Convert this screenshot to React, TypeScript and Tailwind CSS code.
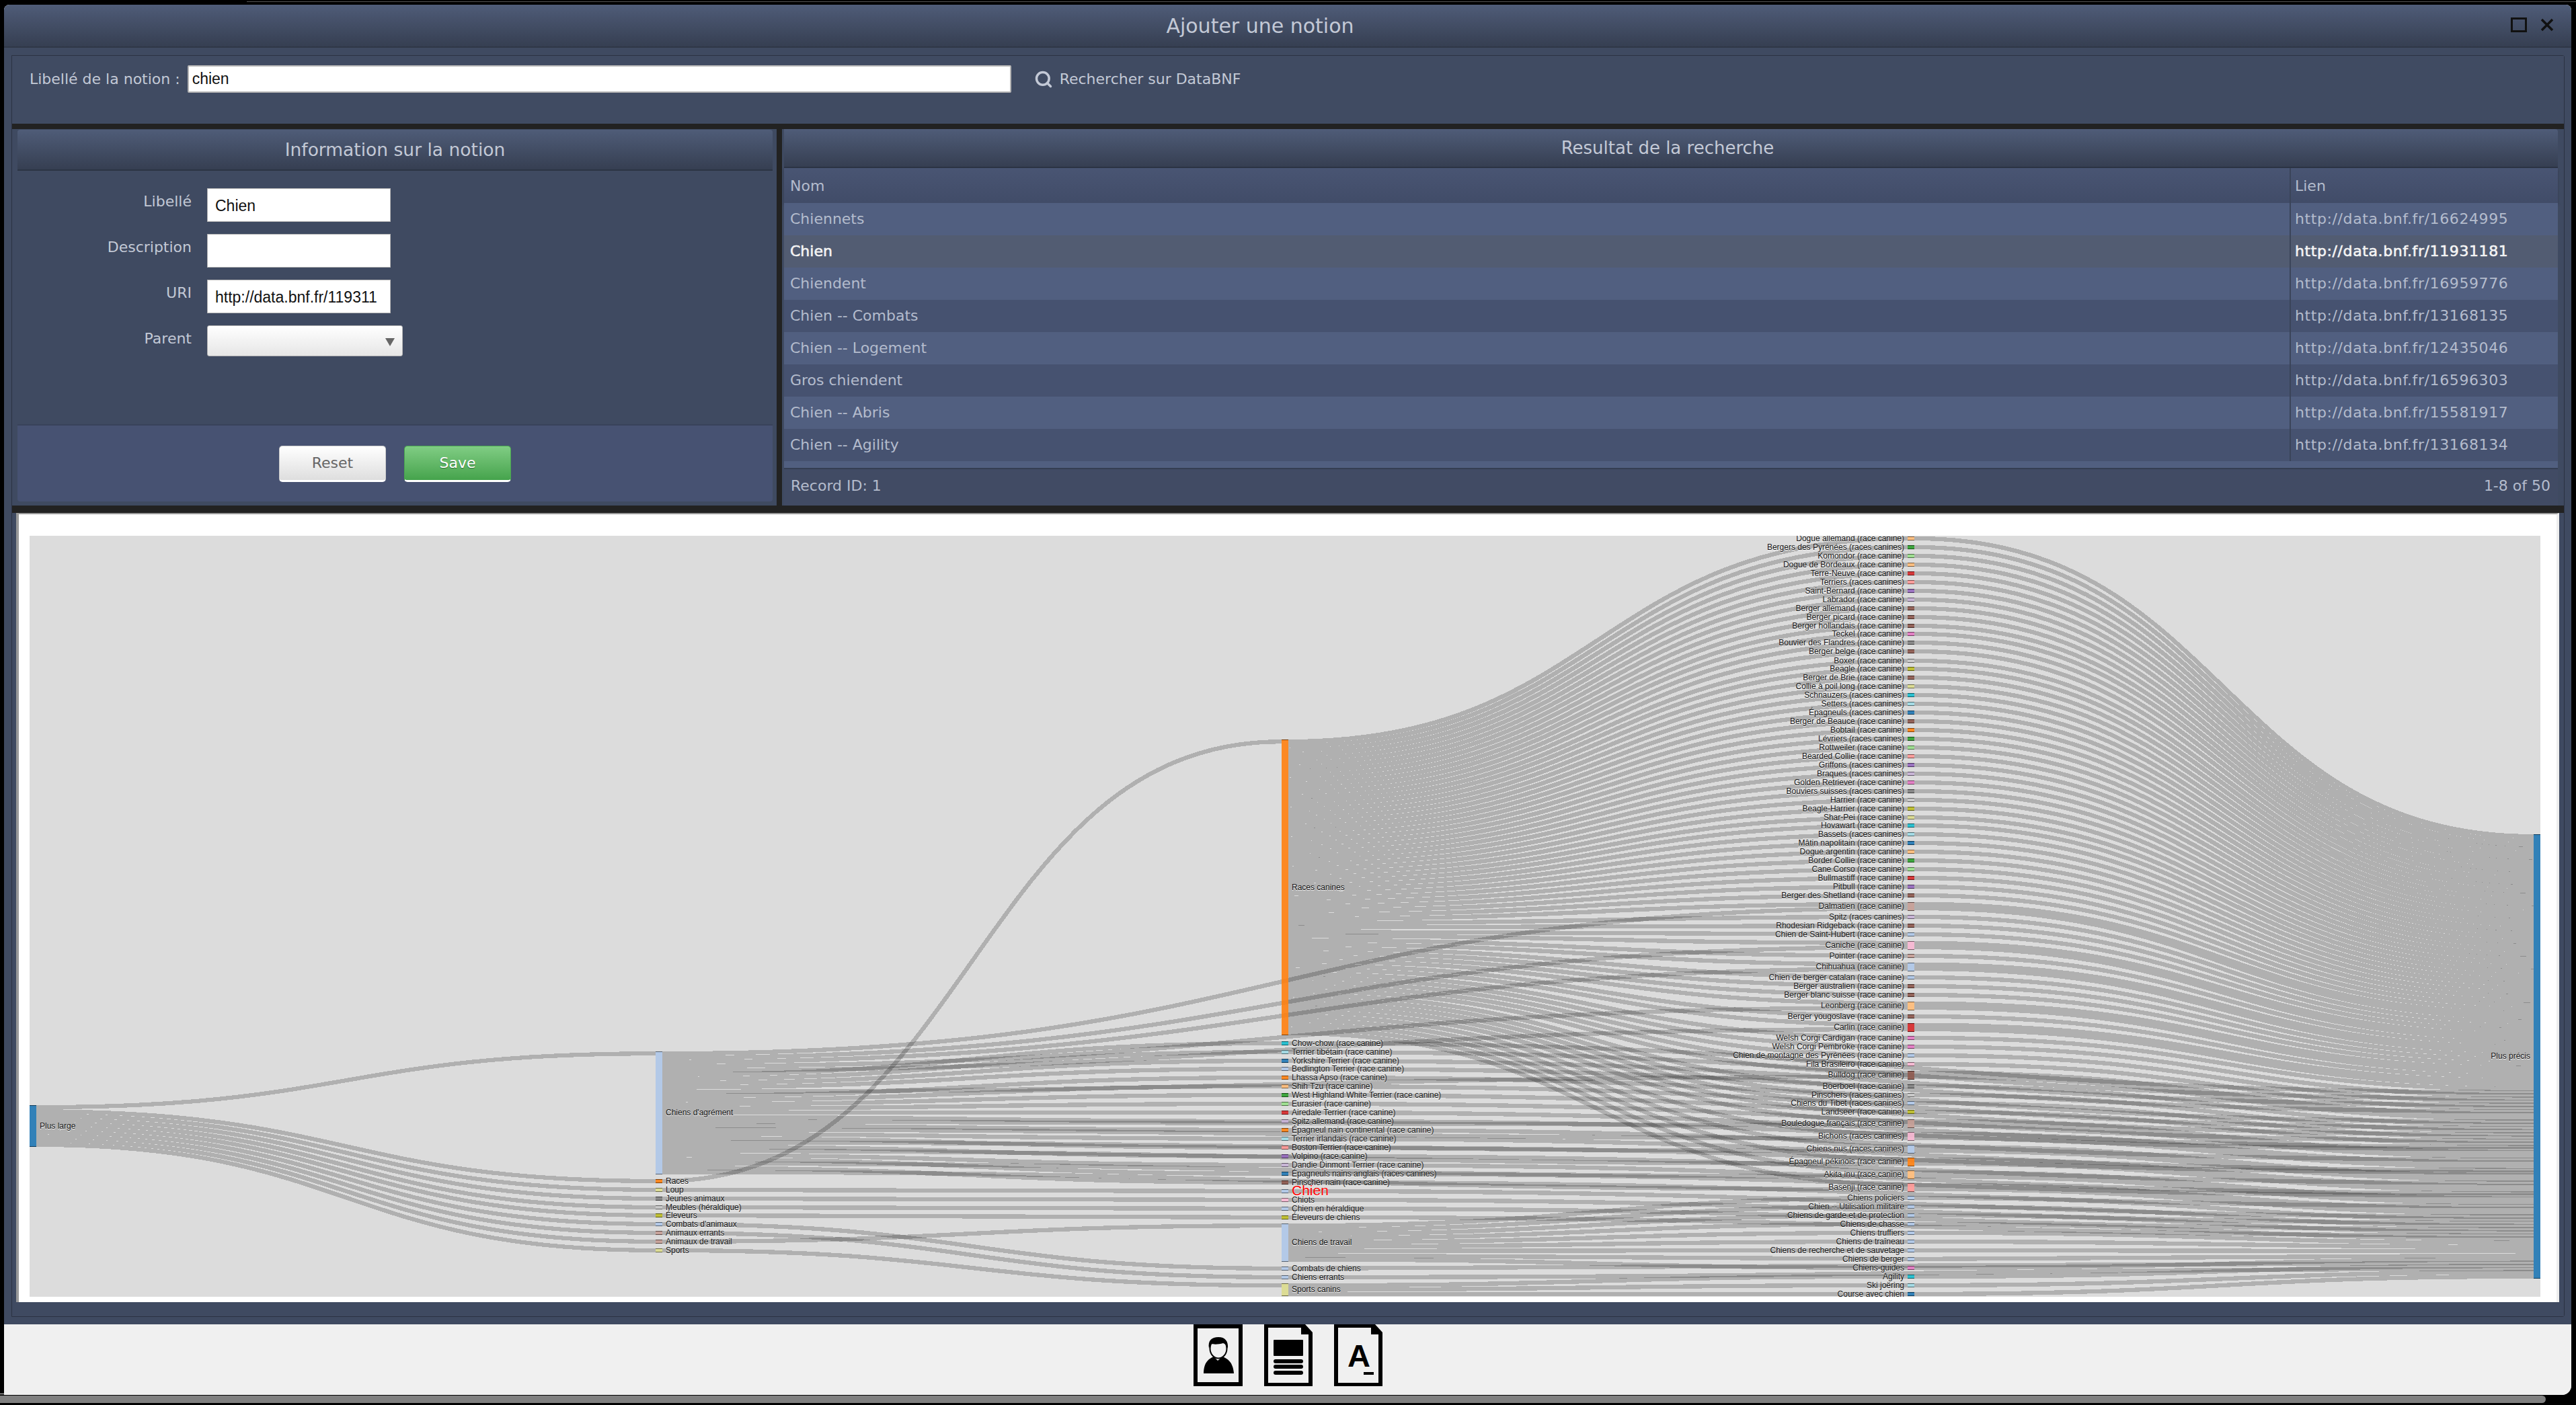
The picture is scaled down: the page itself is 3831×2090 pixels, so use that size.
import { Search } from "lucide-react";

const BLUE = "#1f77b4";
const LBLUE = "#aec7e8";
const ORANGE = "#ff7f0e";
const PEACH = "#ffbb78";
const GREEN = "#2ca02c";
const LGREEN = "#98df8a";
const RED = "#d62728";
const SALMON = "#ff9896";
const PURPLE = "#9467bd";
const LILAC = "#c5b0d5";
const BROWN = "#8c564b";
const TAN = "#c49c94";
const PINK = "#e377c2";
const LPINK = "#f7b6d2";
const GREY = "#7f7f7f";
const LGREY = "#c7c7c7";
const OLIVE = "#bcbd22";
const KHAKI = "#dbdb8d";
const CYAN = "#17becf";
const LCYAN = "#9edae5";

type Raw = [string, string, number, number?];

type SankeyNode = {
  name: string;
  color: string;
  col: number;
  cy: number;
  h: number;
};

const X = [44, 975, 1906, 2837, 3768];
const NODE_W = 10;
const OX = 44;
const OY = 797;
const UNIT = 6.3;

const col1: Raw[] = [
  ["Chiens d'agrément", LBLUE, 1655.5, 183],
  ["Races", ORANGE, 1757],
  ["Loup", KHAKI, 1770],
  ["Jeunes animaux", GREY, 1783],
  ["Meubles (héraldique)", LGREY, 1796],
  ["Éleveurs", OLIVE, 1808],
  ["Combats d'animaux", LBLUE, 1821],
  ["Animaux errants", TAN, 1834],
  ["Animaux de travail", TAN, 1847],
  ["Sports", KHAKI, 1860],
];

const dogsCol2: Raw[] = [
  ["Chow-chow (race canine)", CYAN, 1552],
  ["Terrier tibétain (race canine)", LCYAN, 1565],
  ["Yorkshire Terrier (race canine)", BLUE, 1578],
  ["Bedlington Terrier (race canine)", LBLUE, 1590],
  ["Lhassa Apso (race canine)", ORANGE, 1603],
  ["Shih Tzu (race canine)", PEACH, 1616],
  ["West Highland White Terrier (race canine)", GREEN, 1629],
  ["Eurasier (race canine)", LGREEN, 1642],
  ["Airedale Terrier (race canine)", RED, 1655],
  ["Spitz allemand (race canine)", LILAC, 1668],
  ["Épagneul nain continental (race canine)", ORANGE, 1681],
  ["Terrier irlandais (race canine)", LCYAN, 1694],
  ["Boston Terrier (race canine)", SALMON, 1707],
  ["Volpino (race canine)", PURPLE, 1720],
  ["Dandie Dinmont Terrier (race canine)", LILAC, 1733],
  ["Épagneuls nains anglais (races canines)", BLUE, 1746],
  ["Pinscher nain (race canine)", BROWN, 1759],
];

const otherCol2: Raw[] = [
  ["Races canines", ORANGE, 1320, 440],
  ["Chien", LBLUE, 1772],
  ["Chiots", LPINK, 1785],
  ["Chien en héraldique", LBLUE, 1798],
  ["Éleveurs de chiens", OLIVE, 1811],
  ["Chiens de travail", LBLUE, 1848.5, 57],
  ["Combats de chiens", LBLUE, 1887],
  ["Chiens errants", LBLUE, 1900],
  ["Sports canins", KHAKI, 1918.5, 19],
];

const breedsCol3: Raw[] = [
  ["Dogue allemand (race canine)", PEACH, 801],
  ["Bergers des Pyrénées (races canines)", GREEN, 814],
  ["Komondor (race canine)", LGREEN, 827],
  ["Dogue de Bordeaux (race canine)", PEACH, 840],
  ["Terre-Neuve (race canine)", RED, 853],
  ["Terriers (races canines)", SALMON, 866],
  ["Saint-Bernard (race canine)", PURPLE, 879],
  ["Labrador (race canine)", LILAC, 892],
  ["Berger allemand (race canine)", BROWN, 905],
  ["Berger picard (race canine)", BROWN, 918],
  ["Berger hollandais (race canine)", BROWN, 931],
  ["Teckel (race canine)", PINK, 943],
  ["Bouvier des Flandres (race canine)", GREY, 956],
  ["Berger belge (race canine)", BROWN, 969],
  ["Boxer (race canine)", LGREY, 983],
  ["Beagle (race canine)", OLIVE, 995],
  ["Berger de Brie (race canine)", BROWN, 1008],
  ["Collie à poil long (race canine)", KHAKI, 1021],
  ["Schnauzers (races canines)", CYAN, 1034],
  ["Setters (races canines)", LCYAN, 1047],
  ["Épagneuls (races canines)", BLUE, 1060],
  ["Berger de Beauce (race canine)", BROWN, 1073],
  ["Bobtail (race canine)", ORANGE, 1086],
  ["Lévriers (races canines)", GREEN, 1099],
  ["Rottweiler (race canine)", LGREEN, 1112],
  ["Bearded Collie (race canine)", SALMON, 1125],
  ["Griffons (races canines)", PURPLE, 1138],
  ["Braques (races canines)", LILAC, 1151],
  ["Golden Retriever (race canine)", PINK, 1164],
  ["Bouviers suisses (races canines)", GREY, 1177],
  ["Harrier (race canine)", LGREY, 1190],
  ["Beagle-Harrier (race canine)", OLIVE, 1203],
  ["Shar-Pei (race canine)", KHAKI, 1216],
  ["Hovawart (race canine)", CYAN, 1228],
  ["Bassets (races canines)", LCYAN, 1241],
  ["Mâtin napolitain (race canine)", BLUE, 1254],
  ["Dogue argentin (race canine)", PEACH, 1267],
  ["Border Collie (race canine)", GREEN, 1280],
  ["Cane Corso (race canine)", LGREEN, 1293],
  ["Bullmastiff (race canine)", RED, 1306],
  ["Pitbull (race canine)", PURPLE, 1319],
  ["Berger des Shetland (race canine)", BROWN, 1332],
  ["Dalmatien (race canine)", TAN, 1348, 13],
  ["Spitz (races canines)", LILAC, 1364],
  ["Rhodesian Ridgeback (race canine)", BROWN, 1377],
  ["Chien de Saint-Hubert (race canine)", LBLUE, 1390],
  ["Caniche (race canine)", LPINK, 1406, 13],
  ["Pointer (race canine)", TAN, 1422],
  ["Chihuahua (race canine)", LBLUE, 1438, 13],
  ["Chien de berger catalan (race canine)", LBLUE, 1454],
  ["Berger australien (race canine)", BROWN, 1467],
  ["Berger blanc suisse (race canine)", BROWN, 1480],
  ["Leonberg (race canine)", PEACH, 1496, 13],
  ["Berger yougoslave (race canine)", BROWN, 1512],
  ["Carlin (race canine)", RED, 1528, 13],
  ["Welsh Corgi Cardigan (race canine)", PINK, 1544],
  ["Welsh Corgi Pembroke (race canine)", PINK, 1557],
  ["Chien de montagne des Pyrénées (race canine)", LBLUE, 1570],
  ["Fila Brasileiro (race canine)", LPINK, 1583],
  ["Bulldog (race canine)", BROWN, 1599, 13],
  ["Boerboel (race canine)", GREY, 1616],
  ["Pinschers (races canines)", LGREY, 1629],
  ["Chiens du Tibet (races canines)", LBLUE, 1641],
  ["Landseer (race canine)", OLIVE, 1654],
  ["Bouledogue français (race canine)", TAN, 1671, 13],
  ["Bichons (races canines)", LPINK, 1690, 13],
  ["Chiens nus (races canines)", LBLUE, 1709, 13],
  ["Épagneul pékinois (race canine)", ORANGE, 1728, 13],
  ["Akita inu (race canine)", PEACH, 1747, 13],
  ["Basenji (race canine)", SALMON, 1766, 13],
];

const workCol3: Raw[] = [
  ["Chiens policiers", LBLUE, 1782],
  ["Chien -- Utilisation militaire", LBLUE, 1795],
  ["Chiens de garde et de protection", LBLUE, 1808],
  ["Chiens de chasse", LBLUE, 1821],
  ["Chiens truffiers", LBLUE, 1834],
  ["Chiens de traîneau", LBLUE, 1847],
  ["Chiens de recherche et de sauvetage", LBLUE, 1860],
  ["Chiens de berger", LBLUE, 1873],
  ["Chiens-guides", PINK, 1886],
];

const sportCol3: Raw[] = [
  ["Agility", CYAN, 1899],
  ["Ski joëring", LCYAN, 1912],
  ["Course avec chien", BLUE, 1925],
];

function makeNodes(list: Raw[], col: number): SankeyNode[] {
  return list.map(([name, color, cy, h]) => ({ name, color, col, cy, h: h ?? 6.5 }));
}

const plusLarge = makeNodes([["Plus large", BLUE, 1675, 62]], 0)[0];
const plusPrecis = makeNodes([["Plus précis", BLUE, 1571.5, 661]], 4)[0];
const n1 = makeNodes(col1, 1);
const dogs = makeNodes(dogsCol2, 2);
const others = makeNodes(otherCol2, 2);
const breeds = makeNodes(breedsCol3, 3);
const works = makeNodes(workCol3, 3);
const sports = makeNodes(sportCol3, 3);
const col3All = [...breeds, ...works, ...sports];

const nodes = [plusLarge, ...n1, ...dogs, ...others, ...col3All, plusPrecis];

type Edge = { s: SankeyNode; t: SankeyNode; sw: number; tw: number };
const edges: Edge[] = [];
const addEdge = (s: SankeyNode, t: SankeyNode, sw = 1, tw = 1) => edges.push({ s, t, sw, tw });

n1.forEach((n) => addEdge(plusLarge, n));
const agrement = n1[0];
const tall = breeds.filter((b) => b.h > 10);
dogs.forEach((d) => addEdge(agrement, d));
tall.forEach((b) => addEdge(agrement, b));
const [races, chien, chiots, heraldique, eleveurs, travail, combats, errants, sportsCanins] = others;
addEdge(n1[1], races);
addEdge(n1[2], chien);
addEdge(n1[3], chiots);
addEdge(n1[4], heraldique);
addEdge(n1[5], eleveurs);
addEdge(n1[6], combats);
addEdge(n1[7], errants);
addEdge(n1[8], travail);
addEdge(n1[9], sportsCanins);
breeds.forEach((b) => addEdge(races, b));
works.forEach((w) => addEdge(travail, w));
sports.forEach((s) => addEdge(sportsCanins, s));
col3All.forEach((n) => addEdge(n, plusPrecis, n.h > 10 ? 2 : 1, n.h > 10 ? 2 : 1));
[...dogs, chien, chiots, heraldique, eleveurs, combats, errants].forEach((n) => addEdge(n, plusPrecis, 1, 0.5));

// stack the links on each node, the way d3-sankey does
function layoutLinks() {
  const ys = new Map<Edge, { y0: number; y1: number; w: number }>();
  edges.forEach((e) => ys.set(e, { y0: 0, y1: 0, w: e.sw * UNIT }));
  nodes.forEach((n) => {
    const outs = edges.filter((e) => e.s === n).sort((a, b) => a.t.cy - b.t.cy);
    const outSum = outs.reduce((acc, e) => acc + e.sw, 0);
    const k = Math.min(UNIT, n.h / (outSum || 1));
    let y = n.cy - n.h / 2;
    outs.forEach((e) => {
      const w = e.sw * k;
      const cur = ys.get(e)!;
      cur.y0 = y + w / 2;
      cur.w = w;
      y += w;
    });
    const ins = edges.filter((e) => e.t === n).sort((a, b) => a.s.cy - b.s.cy);
    const inSum = ins.reduce((acc, e) => acc + e.tw, 0);
    const kIn = Math.min(UNIT, n.h / (inSum || 1));
    let yIn = n.cy - n.h / 2;
    ins.forEach((e) => {
      const w = e.tw * kIn;
      ys.get(e)!.y1 = yIn + w / 2;
      yIn += w;
    });
  });
  return edges.map((e) => {
    const v = ys.get(e)!;
    const x0 = X[e.s.col] + NODE_W - OX;
    const x1 = X[e.t.col] - OX;
    const xm = (x0 + x1) / 2;
    const y0 = (v.y0 - OY).toFixed(1);
    const y1 = (v.y1 - OY).toFixed(1);
    return { d: `M${x0},${y0}C${xm},${y0} ${xm},${y1} ${x1},${y1}`, w: v.w };
  });
}

const links = layoutLinks();

function darker(hex: string) {
  const v = parseInt(hex.slice(1), 16);
  const f = (c: number) => Math.round(c * 0.49);
  return `rgb(${f(v >> 16)},${f((v >> 8) & 255)},${f(v & 255)})`;
}

function SankeyChart() {
  return (
    <svg width={3734} height={1132} className="block bg-[#dcdcdc] font-['Liberation_Sans',Arial,sans-serif] [text-shadow:0_1px_0_#fff]">
      <g fill="none" stroke="#000" strokeOpacity={0.2} shapeRendering="crispEdges">
        {links.map((l, i) => (
          <path key={i} d={l.d} strokeWidth={l.w} />
        ))}
      </g>
      {nodes.map((n) => {
        const x = X[n.col] - OX;
        const y = n.cy - n.h / 2 - OY;
        const isChien = n.name === "Chien";
        const left = n.col >= 3;
        return (
          <g key={`${n.col}-${n.name}`} shapeRendering="crispEdges">
            <rect x={x} y={y} width={NODE_W} height={n.h} fill={n.color} fillOpacity={0.9} />
            <rect x={x} y={y} width={NODE_W} height={1} fill={darker(n.color)} />
            <rect x={x} y={y + n.h - 1} width={NODE_W} height={1} fill={darker(n.color)} />
            <text
              x={left ? x - 5 : x + NODE_W + 5}
              y={n.cy - OY}
              dy=".3em"
              textAnchor={left ? "end" : "start"}
              fontSize={isChien ? 21 : 12}
              fill={isChien ? "#ff0000" : "#111"}
            >
              {n.name}
            </text>
          </g>
        );
      })}
    </svg>
  );
}

const rows = [
  ["Chiennets", "http://data.bnf.fr/16624995"],
  ["Chien", "http://data.bnf.fr/11931181"],
  ["Chiendent", "http://data.bnf.fr/16959776"],
  ["Chien -- Combats", "http://data.bnf.fr/13168135"],
  ["Chien -- Logement", "http://data.bnf.fr/12435046"],
  ["Gros chiendent", "http://data.bnf.fr/16596303"],
  ["Chien -- Abris", "http://data.bnf.fr/15581917"],
  ["Chien -- Agility", "http://data.bnf.fr/13168134"],
];

function PanelHeader({ title, className }: { title: string; className: string }) {
  return (
    <div
      className={`flex items-center justify-center bg-linear-to-b from-[#4f5c78] to-[#363f52] border-b-2 border-[#2c3444] text-[#c3c9d6] ${className}`}
    >
      {title}
    </div>
  );
}

function FormRow({ label, children }: { label: string; children: React.ReactNode }) {
  return (
    <div className="flex h-[50px]">
      <div className="w-[259px] pt-[7px] text-right text-[22px] leading-[26px] text-[#c3c9d6]">{label}</div>
      <div className="ml-[23px]">{children}</div>
    </div>
  );
}

function TextInput({ value }: { value: string }) {
  return (
    <div className="h-[50px] w-[273px] overflow-hidden border border-[#b5b5b5] bg-white pl-[11px] font-['Liberation_Sans'] text-[23px] leading-[50px] whitespace-nowrap text-[#111]">
      {value}
    </div>
  );
}

function PortraitIcon() {
  return (
    <svg width={73} height={92} viewBox="0 0 73 92">
      <path d="M0 0H73V92H0Z M6 6V86H67V6Z" fillRule="evenodd" fill="#000" />
      <path d="M15 73C15 60 20 52 30 48L36 54L43 48C54 52 59 60 60 73Z" fill="#000" />
      <ellipse cx="37" cy="36" rx="12.5" ry="14.5" fill="#f0f0f0" stroke="#000" strokeWidth="2" />
      <path d="M23 36C21 24 27 19 37 19C47 19 52 25 51 36C49 31 47 29 44 28C38 30 30 30 26 29C24 31 24 33 23 36Z" fill="#000" />
    </svg>
  );
}

function ArticleIcon() {
  return (
    <svg width={72} height={92} viewBox="0 0 72 92">
      <path d="M0 0H61L72 12V92H0Z M6 5V87H66V15H55V5Z" fillRule="evenodd" fill="#000" />
      <rect x="14" y="23" width="44" height="24" rx="1" fill="#000" />
      <rect x="14" y="52" width="44" height="6" rx="3" fill="#000" />
      <rect x="14" y="60" width="44" height="6" rx="3" fill="#000" />
      <rect x="14" y="69" width="44" height="6" rx="3" fill="#000" />
    </svg>
  );
}

function LetterIcon() {
  return (
    <svg width={72} height={92} viewBox="0 0 72 92">
      <path d="M0 0H61L72 12V92H0Z M6 5V87H66V15H55V5Z" fillRule="evenodd" fill="#000" />
      <text x="37" y="63" textAnchor="middle" fontSize="47" fontWeight="700" fontFamily="Liberation Sans" fill="#000">
        A
      </text>
      <rect x="44" y="71" width="15" height="4" fill="#000" />
    </svg>
  );
}

export default function App() {
  return (
    <div className="relative h-[2090px] w-[3831px] overflow-hidden bg-black font-['DejaVu_Sans',sans-serif]">
      <div className="h-[7px] pt-[2px] pl-[367px]">
        <div className="h-px bg-[#555]" />
      </div>
      <div className="ml-[6px] flex h-[2068px] w-[3818px] flex-col overflow-hidden rounded-t-[8px] rounded-br-[14px] bg-[#f0f0f0]">
        {/* title bar */}
        <div className="relative flex h-[64px] shrink-0 items-center justify-center border-b-2 border-[#2f3747] bg-linear-to-b from-[#4f5c78] to-[#363f52] pr-[82px] text-[30px] text-[#c3c9d6]">
          Ajouter une notion
          <div className="absolute top-[19px] right-[66px] h-[22px] w-[24px] border-[3px] border-[#111]" />
          <svg className="absolute top-[20px] right-[26px]" width={20} height={20} viewBox="0 0 20 20">
            <path d="M2 2L18 18M18 2L2 18" stroke="#111" strokeWidth="3.5" />
          </svg>
        </div>

        {/* window body */}
        <div className="h-[1899px] shrink-0 bg-[#3f4a61] pt-[11px] pr-[10px] pl-[11px]">
          <div className="flex h-[1877px] flex-col rounded-tr-[3px] rounded-br-[3px] border border-[#2b3242]">
            {/* search */}
            <div className="flex h-[101px] shrink-0 items-start bg-[#404b62] pt-[14px] pl-[26px] text-[22px] text-[#c3c9d6]">
              <div className="flex h-[41px] items-center">Libellé de la notion :</div>
              <div className="ml-[11px] h-[41px] w-[1225px] rounded-[2px] border-2 border-[#b5b5b5] bg-white pl-[5px] font-['Liberation_Sans'] text-[23px] leading-[37px] text-[#111]">
                chien
              </div>
              <div className="ml-[34px] flex h-[41px] items-center gap-[10px]">
                <Search className="h-[28px] w-[28px]" strokeWidth={3} />
                <span>Rechercher sur DataBNF</span>
              </div>
            </div>
            <div className="h-[8px] shrink-0 bg-[#222]" />

            {/* notion form + results */}
            <div className="flex h-[560px] shrink-0">
              <div className="flex w-[1137px] shrink-0 flex-col bg-[#3f4a61] pt-px pr-[6px] pb-[6px] pl-[8px]">
                <PanelHeader title="Information sur la notion" className="h-[61px] shrink-0 rounded-t-[4px] text-[26.5px]" />
                <div className="flex flex-1 flex-col gap-[18px] pt-[26px]">
                  <FormRow label="Libellé">
                    <TextInput value="Chien" />
                  </FormRow>
                  <FormRow label="Description">
                    <TextInput value="" />
                  </FormRow>
                  <FormRow label="URI">
                    <TextInput value="http://data.bnf.fr/119311" />
                  </FormRow>
                  <FormRow label="Parent">
                    <div className="relative h-[46px] w-[291px] rounded-[3px] border border-[#b5b5b5] bg-linear-to-b from-white to-[#e6e6e6]">
                      <div className="absolute top-[18px] right-[11px] h-0 w-0 border-x-[7px] border-t-[12px] border-x-transparent border-t-[#666]" />
                    </div>
                  </FormRow>
                </div>
                <div className="flex h-[115px] shrink-0 items-center justify-center gap-[27px] rounded-b-[4px] border-t-2 border-[#39425a] bg-[#475272]">
                  <div className="flex h-[54px] w-[159px] items-center justify-center rounded-[5px] border border-[#ccc] border-b-[3px] border-b-white bg-linear-to-b from-white to-[#dedede] text-[22px] text-[#666]">
                    Reset
                  </div>
                  <div className="flex h-[54px] w-[159px] items-center justify-center rounded-[5px] border border-[#4aa650] border-b-[3px] border-b-white bg-linear-to-b from-[#80cd84] to-[#45a34c] text-[22px] text-white [text-shadow:0_1px_1px_#2d6b31]">
                    Save
                  </div>
                </div>
              </div>
              <div className="w-[8px] shrink-0 bg-[#222]" />
              <div className="flex min-w-0 flex-1 flex-col bg-[#3f4a61] pr-[9px] pl-[3px]">
                <PanelHeader title="Resultat de la recherche" className="h-[58px] shrink-0 rounded-tr-[4px] pr-[10px] text-[26px]" />
                <div className="flex h-[52px] shrink-0 items-center bg-linear-to-b from-[#495573] to-[#414c68] text-[22px] text-[#b4bccd] shadow-[0_2px_3px_#333c50]">
                  <div className="flex h-full flex-1 items-center pl-[9px]">Nom</div>
                  <div className="flex h-full w-[399px] items-center border-l-2 border-[#3a4459] pl-[6px]">Lien</div>
                </div>
                <div className="h-[394px] shrink-0 overflow-hidden">
                  {rows.map(([name, link], i) => (
                    <div
                      key={link}
                      className={
                        i === 1
                          ? "flex h-[48px] bg-[#525c72] text-[22px] leading-[48px] text-[#f4f4f4] [-webkit-text-stroke:0.6px_#f4f4f4]"
                          : i % 2 === 0
                            ? "flex h-[48px] bg-[#515f80] text-[22px] leading-[48px] text-[#b4bccd]"
                            : "flex h-[48px] bg-[#465270] text-[22px] leading-[48px] text-[#b4bccd]"
                      }
                    >
                      <div className="flex-1 pl-[9px]">{name}</div>
                      <div className="w-[399px] border-l-2 border-[#3a4459] pl-[6px] tracking-[0.6px]">{link}</div>
                    </div>
                  ))}
                  <div className="h-[10px] bg-[#515f80]" />
                </div>
                <div className="flex h-[56px] shrink-0 items-center justify-between border-t-2 border-[#353e52] bg-[#414b64] pr-[11px] pb-[6px] pl-[10px] text-[22px] text-[#b4bccd]">
                  <span>Record ID: 1</span>
                  <span>1-8 of 50</span>
                </div>
              </div>
            </div>
            <div className="h-[11px] shrink-0 bg-[#222]" />

            {/* sankey */}
            <div className="flex-1 bg-[#3f4a61] pr-[7px] pb-[21px] pl-[6px]">
              <div className="h-[1174px] border-t-2 border-r-4 border-l-4 border-t-[#999] border-r-[#eee] border-l-[#999] bg-white pt-[32px] pr-[24px] pl-[16px]">
                <SankeyChart />
              </div>
            </div>
          </div>
        </div>

        {/* bottom toolbar */}
        <div className="flex flex-1 items-start justify-center gap-[32px] bg-[#f0f0f0]">
          <PortraitIcon />
          <ArticleIcon />
          <LetterIcon />
        </div>
      </div>
      <div className="mt-[-2px] h-px w-[3786px] bg-[#ddd]" />
      <div className="mt-[2px] h-[11px] w-[3786px] rounded-r-[6px] bg-[#808080]" />
    </div>
  );
}
